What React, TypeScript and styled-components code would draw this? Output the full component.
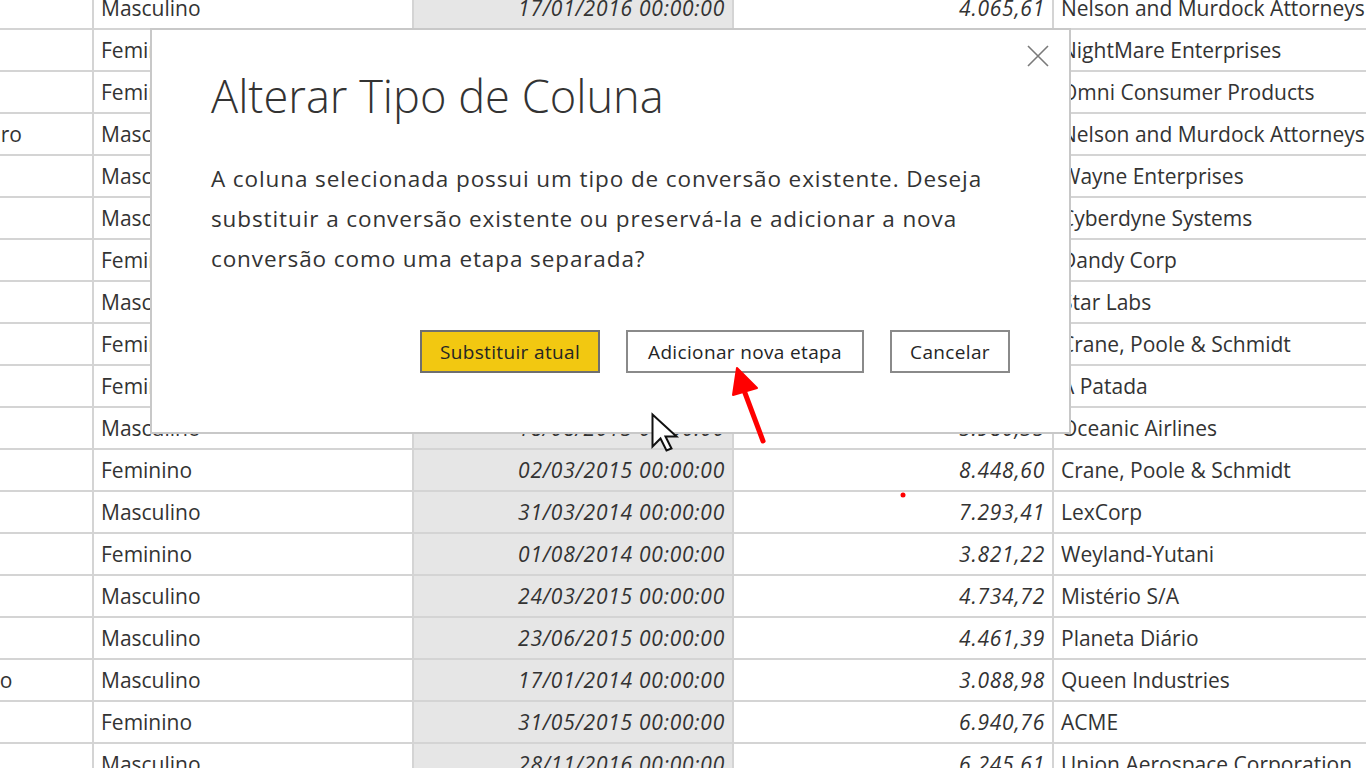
import React from "react";
import styled, { createGlobalStyle } from "styled-components";

const GlobalStyle = createGlobalStyle`
  html, body {
    margin: 0;
    padding: 0;
    background: #ffffff;
    overflow: hidden;
  }
  body {
    font-family: "Open Sans", "Noto Sans", "Liberation Sans", sans-serif;
    color: #333333;
  }
  * { box-sizing: border-box; }
`;

const Page = styled.div`
  position: relative;
  width: 1366px;
  height: 768px;
  overflow: hidden;
  background: #ffffff;
`;

const Table = styled.div`
  display: flex;
  flex-direction: column;
  margin-left: -120px;
  margin-top: -12px;
  width: 1560px;
`;

const Row = styled.div`
  display: grid;
  grid-template-columns: 214px 320px 320px 320px 378px;
  height: 42px;
`;

const Cell = styled.div<{ $align?: "left" | "right"; $italic?: boolean; $shaded?: boolean }>`
  height: 42px;
  border-bottom: 2px solid #d4d4d4;
  border-right: 2px solid #d4d4d4;
  background: ${(p) => (p.$shaded ? "#e6e6e6" : "#ffffff")};
  display: flex;
  align-items: center;
  justify-content: ${(p) => (p.$align === "right" ? "flex-end" : "flex-start")};
  padding: 0 7px 0 7px;
  font-size: 21px;
  font-style: ${(p) => (p.$italic ? "italic" : "normal")};
  letter-spacing: ${(p) => (p.$italic ? "0.75px" : "0")};
  color: #333333;
  white-space: nowrap;
  overflow: hidden;
`;

const Dialog = styled.div`
  position: absolute;
  left: 150px;
  top: 28px;
  width: 921px;
  height: 406px;
  background: #ffffff;
  border: 2px solid #c8c8c8;
  display: flex;
  flex-direction: column;
`;

const CloseRow = styled.div`
  display: flex;
  justify-content: flex-end;
  padding: 10px 15px 0 0;
`;

const CloseButton = styled.button`
  width: 32px;
  height: 32px;
  border: none;
  background: transparent;
  padding: 0;
  display: flex;
  align-items: center;
  justify-content: center;
  cursor: pointer;
`;

const Title = styled.h1`
  margin: -2px 0 0 59px;
  font-family: "Open Sans", "Noto Sans", sans-serif;
  font-weight: 300;
  font-size: 45.2px;
  line-height: 52px;
  color: #333333;
  letter-spacing: 0;
`;

const Message = styled.p`
  margin: 37px 40px 0 59px;
  font-size: 22.5px;
  line-height: 40px;
  letter-spacing: 0.9px;
  color: #333333;
`;

const ButtonRow = styled.div`
  margin-top: auto;
  display: flex;
  justify-content: flex-end;
  gap: 26px;
  padding: 0 59px 59px 0;
`;

const Button = styled.button<{ $primary?: boolean; $w: number }>`
  width: ${(p) => p.$w}px;
  height: 43px;
  border: 2px solid ${(p) => (p.$primary ? "#6f6f6f" : "#8a8a8a")};
  background: ${(p) => (p.$primary ? "#f2c811" : "#ffffff")};
  font-family: "Open Sans", "Noto Sans", sans-serif;
  font-size: 19px;
  letter-spacing: 0.35px;
  color: #252525;
  padding: 0;
  cursor: pointer;
`;

const Overlay = styled.svg`
  position: absolute;
  left: 0;
  top: 0;
  width: 1366px;
  height: 768px;
  pointer-events: none;
`;

type RowData = [string, string, string, string, string];

const rows: RowData[] = [
  ["", "Masculino", "17/01/2016 00:00:00", "4.065,61", "Nelson and Murdock Attorneys"],
  ["Bahia", "Feminino", "05/09/2015 00:00:00", "5.312,44", "NightMare Enterprises"],
  ["", "Feminino", "12/02/2016 00:00:00", "2.154,90", "Omni Consumer Products"],
  ["Rio de Janeiro", "Masculino", "09/07/2014 00:00:00", "6.702,18", "Nelson and Murdock Attorneys"],
  ["", "Masculino", "21/10/2015 00:00:00", "3.447,05", "Wayne Enterprises"],
  ["Paraná", "Masculino", "14/04/2016 00:00:00", "5.118,73", "Cyberdyne Systems"],
  ["", "Feminino", "30/12/2014 00:00:00", "2.981,56", "Dandy Corp"],
  ["Ceará", "Masculino", "06/06/2015 00:00:00", "7.604,12", "Star Labs"],
  ["", "Feminino", "19/11/2015 00:00:00", "4.327,88", "Crane, Poole & Schmidt"],
  ["Goiás", "Feminino", "03/02/2014 00:00:00", "8.015,40", "A Patada"],
  ["", "Masculino", "18/08/2015 00:00:00", "5.980,35", "Oceanic Airlines"],
  ["", "Feminino", "02/03/2015 00:00:00", "8.448,60", "Crane, Poole & Schmidt"],
  ["", "Masculino", "31/03/2014 00:00:00", "7.293,41", "LexCorp"],
  ["", "Feminino", "01/08/2014 00:00:00", "3.821,22", "Weyland-Yutani"],
  ["", "Masculino", "24/03/2015 00:00:00", "4.734,72", "Mistério S/A"],
  ["", "Masculino", "23/06/2015 00:00:00", "4.461,39", "Planeta Diário"],
  ["Mato Grosso", "Masculino", "17/01/2014 00:00:00", "3.088,98", "Queen Industries"],
  ["", "Feminino", "31/05/2015 00:00:00", "6.940,76", "ACME"],
  ["", "Masculino", "28/11/2016 00:00:00", "6.245,61", "Union Aerospace Corporation"],
];

const CloseIcon = () => (
  <svg width="22" height="22" viewBox="0 0 22 22">
    <path d="M1 1 L21 21 M21 1 L1 21" stroke="#7a7a7a" strokeWidth="1.6" fill="none" />
  </svg>
);

export default function App() {
  return (
    <>
      <GlobalStyle />
      <Page>
        <Table>
          {rows.map((r, i) => (
            <Row key={i}>
              <Cell>{r[0]}</Cell>
              <Cell>{r[1]}</Cell>
              <Cell $align="right" $italic $shaded>
                {r[2]}
              </Cell>
              <Cell $align="right" $italic>
                {r[3]}
              </Cell>
              <Cell>{r[4]}</Cell>
            </Row>
          ))}
        </Table>

        <Dialog role="dialog">
          <CloseRow>
            <CloseButton aria-label="Fechar">
              <CloseIcon />
            </CloseButton>
          </CloseRow>
          <Title>Alterar Tipo de Coluna</Title>
          <Message>
            A coluna selecionada possui um tipo de conversão existente. Deseja substituir a conversão
            existente ou preservá-la e adicionar a nova conversão como uma etapa separada?
          </Message>
          <ButtonRow>
            <Button $primary $w={180}>Substituir atual</Button>
            <Button $w={238}>Adicionar nova etapa</Button>
            <Button $w={120}>Cancelar</Button>
          </ButtonRow>
        </Dialog>

        <Overlay viewBox="0 0 1366 768">
          <line x1="763" y1="441" x2="742" y2="385" stroke="#ff0000" strokeWidth="5" strokeLinecap="round" />
          <polygon points="737,368 733,395 757,388" fill="#ff0000" stroke="#ff0000" strokeWidth="2" strokeLinejoin="round" />
          <circle cx="903" cy="495" r="2.5" fill="#ff0000" />
          <path
            d="M652.5 414.5 L652.5 446.5 L660.5 438.5 L666.5 450.5 L671.5 448.5 L665.5 436.5 L676.5 436.5 Z"
            fill="#ffffff"
            stroke="#111111"
            strokeWidth="2"
            strokeLinejoin="miter"
          />
        </Overlay>
      </Page>
    </>
  );
}
